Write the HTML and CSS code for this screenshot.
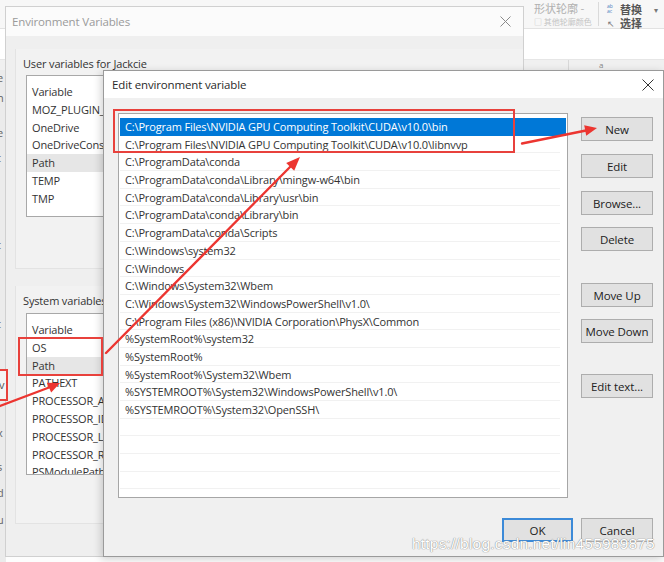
FILE: index.html
```html
<!DOCTYPE html>
<html>
<head>
<meta charset="utf-8">
<link rel="stylesheet" href="styles.css">
</head>
<body>
<div class="desk">
  <div class="bgleft">
    <span class="bg-ch c1">e</span><span class="bg-ch c2">n</span><span class="bg-ch c3">e</span><span class="bg-ch c4">t</span><span class="bg-ch c5">t</span><span class="bg-ch c6">t</span><span class="bg-ch c7">x</span><span class="bg-ch c8">s</span><span class="bg-ch c9">d</span><span class="bg-ch c10">u</span>
  </div>
  <div class="ribbon">
    <div class="rib-top">
      <div class="rib-grp">
        <span class="rib-dim">形状轮廓 -</span>
        <span class="rib-small">□ 其他轮廓颜色</span>
      </div>
      <div class="rib-sep"></div>
      <div class="rib-grp2">
        <div class="rib-line"><span class="rib-ico">ab<br>ac</span><span class="rib-bold">替换</span><span class="rib-caret">▾</span></div>
        <div class="rib-line"><span class="rib-ptr">↖</span><span class="rib-bold">选择</span></div>
      </div>
    </div>
    <div class="rib-doc"></div>
    <div class="rib-ruler"><span class="rr1"></span><span class="rr2">a</span></div>
  </div>

  <div class="win env">
    <div class="tbar">
      <span class="ttl">Environment Variables</span>
      <svg class="xbtn" width="11" height="11" viewBox="0 0 11 11"><path d="M0.5 0.5L10.5 10.5M10.5 0.5L0.5 10.5" stroke="#8a8a8a" stroke-width="1"/></svg>
    </div>
    <div class="env-body">
      <section class="grp grp-user">
        <div class="lbl">User variables for Jackcie</div>
        <div class="lb lb-user">
          <div class="r">Variable</div>
          <div class="r">MOZ_PLUGIN_PATH</div>
          <div class="r">OneDrive</div>
          <div class="r">OneDriveConsumer</div>
          <div class="r hl">Path</div>
          <div class="r">TEMP</div>
          <div class="r">TMP</div>
        </div>
      </section>
      <section class="grp grp-sys">
        <div class="lbl">System variables</div>
        <div class="lb lb-sys">
          <div class="r">Variable</div>
          <div class="r">OS</div>
          <div class="r hl">Path</div>
          <div class="r">PATHEXT</div>
          <div class="r">PROCESSOR_ARCHITECTURE</div>
          <div class="r">PROCESSOR_IDENTIFIER</div>
          <div class="r">PROCESSOR_LEVEL</div>
          <div class="r">PROCESSOR_REVISION</div>
          <div class="r">PSModulePath</div>
        </div>
      </section>
    </div>
  </div>

  <div class="win edit">
    <div class="tbar tbar-edit">
      <span class="ttl ttl-edit">Edit environment variable</span>
      <svg class="xbtn xbtn-edit" width="12" height="12" viewBox="0 0 12 12"><path d="M0.5 0.5L11.5 11.5M11.5 0.5L0.5 11.5" stroke="#333" stroke-width="1"/></svg>
    </div>
    <div class="edit-body">
      <div class="plist">
        <div class="pr sel">C:\Program Files\NVIDIA GPU Computing Toolkit\CUDA\v10.0\bin</div>
        <div class="pr">C:\Program Files\NVIDIA GPU Computing Toolkit\CUDA\v10.0\libnvvp</div>
        <div class="pr">C:\ProgramData\conda</div>
        <div class="pr">C:\ProgramData\conda\Library\mingw-w64\bin</div>
        <div class="pr">C:\ProgramData\conda\Library\usr\bin</div>
        <div class="pr">C:\ProgramData\conda\Library\bin</div>
        <div class="pr">C:\ProgramData\conda\Scripts</div>
        <div class="pr">C:\Windows\system32</div>
        <div class="pr">C:\Windows</div>
        <div class="pr">C:\Windows\System32\Wbem</div>
        <div class="pr">C:\Windows\System32\WindowsPowerShell\v1.0\</div>
        <div class="pr">C:\Program Files (x86)\NVIDIA Corporation\PhysX\Common</div>
        <div class="pr">%SystemRoot%\system32</div>
        <div class="pr">%SystemRoot%</div>
        <div class="pr">%SystemRoot%\System32\Wbem</div>
        <div class="pr">%SYSTEMROOT%\System32\WindowsPowerShell\v1.0\</div>
        <div class="pr">%SYSTEMROOT%\System32\OpenSSH\</div>
        <div class="pr"></div>
        <div class="pr"></div>
        <div class="pr"></div>
        <div class="pr"></div>
      </div>
      <div class="btncol">
        <button class="btn">New</button>
        <button class="btn">Edit</button>
        <button class="btn">Browse...</button>
        <button class="btn">Delete</button>
        <button class="btn gap-big">Move Up</button>
        <button class="btn">Move Down</button>
        <button class="btn gap-big2">Edit text...</button>
      </div>
      <div class="footer">
        <button class="btn btn-ok">OK</button>
        <button class="btn">Cancel</button>
      </div>
    </div>
  </div>

  <div class="mark mark-a"></div>
  <div class="mark mark-b"></div>
  <div class="mark mark-c"><span class="mark-c-txt">v</span></div>

  <svg class="arrows" width="664" height="562" viewBox="0 0 664 562">
    <g stroke="#ec3530" stroke-width="2.4" fill="none" stroke-linecap="round">
      <line x1="522" y1="143.5" x2="586" y2="130.5"/>
      <line x1="106" y1="353" x2="291" y2="166"/>
      <line x1="0" y1="406" x2="49" y2="387.5"/>
    </g>
    <g fill="#ec3530">
      <polygon points="597,128 586.2,135.8 584.2,125.3"/>
      <polygon points="300,157 294.2,170.8 286.2,162.9"/>
      <polygon points="60,383 51.2,392.6 46.8,382.8"/>
    </g>
  </svg>

  <div class="watermark">https://blog.csdn.net/lin455989875</div>
</div>
</body>
</html>
```

FILE: styles.css
```css
* { box-sizing: border-box; margin: 0; padding: 0; }

body {
  width: 664px;
  height: 562px;
  overflow: hidden;
  background: #fff;
  font-family: "Open Sans", "Noto Sans", sans-serif;
  font-size: 11px;
  letter-spacing: -0.15px;
  color: #2e2e2e;
}

.desk {
  position: relative;
  width: 664px;
  height: 562px;
  overflow: hidden;
  background: #fdfdfd;
}

/* background Word window bits */
.bgleft {
  position: absolute;
  left: 0;
  top: 0;
  width: 6px;
  height: 562px;
  background: #ebebeb;
  overflow: hidden;
}
.bg-ch {
  position: absolute;
  left: -3px;
  font-size: 11px;
  color: #666;
}
.bg-ch.c1 { top: 70px; } .bg-ch.c2 { top: 90px; } .bg-ch.c3 { top: 125px; }
.bg-ch.c4 { top: 150px; } .bg-ch.c5 { top: 237px; } .bg-ch.c6 { top: 316px; }
.bg-ch.c7 { top: 425px; } .bg-ch.c8 { top: 459px; } .bg-ch.c9 { top: 485px; }
.bg-ch.c10 { top: 512px; }

.ribbon {
  position: absolute;
  left: 0;
  top: 0;
  width: 664px;
  height: 70px;
  background: #f6f6f6;
  letter-spacing: 0;
}
.rib-top {
  height: 29px;
  display: flex;
  padding-left: 530px;
  border-bottom: 1px solid #e2e2e2;
  background: #f7f7f7;
}
.rib-grp {
  width: 68px;
  display: flex;
  flex-direction: column;
  padding-top: 1px;
  padding-left: 4px;
}
.rib-dim { color: #b0b0b0; font-size: 11px; line-height: 15px; font-family: "Noto Sans CJK SC", sans-serif; }
.rib-small { color: #c4c4c4; font-size: 8px; line-height: 11px; font-family: "Noto Sans CJK SC", sans-serif; }
.rib-sep { width: 1px; background: #dadada; margin: 2px 0; }
.rib-grp2 { padding-left: 8px; display: flex; flex-direction: column; padding-top: 2px; }
.rib-line { display: flex; align-items: center; height: 14px; gap: 2px; }
.rib-ico { font-size: 5px; line-height: 5px; color: #4a7fc0; width: 11px; }
.rib-bold { font-family: "Noto Sans CJK SC", sans-serif; font-weight: 700; font-size: 11px; color: #555; }
.rib-caret { font-size: 8px; color: #777; margin-left: 10px; }
.rib-ptr { font-size: 9px; color: #777; width: 11px; }
.rib-doc { height: 30px; background: #fff; }
.rib-ruler {
  height: 11px;
  background: #f0f0f0;
  border-top: 1px solid #e6e6e6;
  display: flex;
  padding-left: 568px;
  gap: 30px;
}
.rr1 { width: 1px; background: #d8d8d8; }
.rr2 { font-size: 8px; color: #888; line-height: 9px; }

/* windows */
.win {
  position: absolute;
  background: #f0f0f0;
}
.env {
  left: 5px;
  top: 6px;
  width: 519px;
  height: 551px;
  border: 1px solid #d0d0d0;
  background: #efefef;
}
.tbar {
  height: 29px;
  background: #fbfbfb;
  display: flex;
  align-items: center;
  justify-content: space-between;
  padding: 0 12px 0 6px;
}
.ttl { color: #9a9a9a; font-size: 11.5px; }
.env-body { padding-left: 9px; }
.grp {
  border-left: 1px solid #e3e3e3;
  border-bottom: 1px solid #e3e3e3;
  background: #f2f2f2;
  padding: 8px 0 0 10px;
}
.grp-user { margin-top: 13px; height: 220px; }
.grp-sys { margin-top: 17px; height: 238px; }
.lbl { line-height: 14px; color: #333; margin-left: -3px; }
.lb {
  margin-top: 4px;
  width: 420px;
  background: #fff;
  border: 1px solid #a8a8a8;
  padding: 7px 0 0 5px;
  overflow: hidden;
}
.lb-user { height: 142px; }
.lb-sys { height: 162px; margin-top: 5px; }
.r {
  height: 17.8px;
  line-height: 17.8px;
  white-space: nowrap;
  color: #333;
}
.r.hl { background: #e6e6e6; margin-left: -5px; padding-left: 5px; }

/* edit dialog */
.edit {
  left: 103px;
  top: 70px;
  width: 561px;
  height: 487px;
  border: 1px solid #9a9a9a;
  box-shadow: -2px 2px 8px rgba(0,0,0,0.18);
  background: #f0f0f0;
}
.tbar-edit {
  height: 27px;
  background: #fff;
  padding: 0 9px 0 8px;
}
.ttl-edit { color: #2a2a2a; font-size: 11.5px; }
.edit-body {
  display: grid;
  grid-template-columns: 450px 72px;
  column-gap: 13px;
  padding: 15px 0 0 14px;
}
.plist {
  height: 385px;
  background: #fff;
  border: 1px solid #a6a6a6;
  padding: 4px 1px 0 1px;
  overflow: hidden;
}
.pr {
  height: 17.7px;
  line-height: 17.7px;
  padding-left: 5px;
  white-space: nowrap;
  color: #333;
  border-bottom: 1px solid #f1f1f1;
  margin-right: 6px;
}
.pr.sel {
  background: #0078d7;
  color: #fff;
  border-bottom-color: #0078d7;
  margin-right: 0;
}
.btncol {
  display: flex;
  flex-direction: column;
  gap: 13px;
  padding-top: 4px;
}
.btn {
  width: 72px;
  height: 24px;
  background: #e1e1e1;
  border: 1px solid #adadad;
  font-family: inherit;
  font-size: 11.5px;
  letter-spacing: -0.1px;
  color: #222;
}
.btncol .btn:nth-child(4) { margin-top: -1px; }
.gap-big { margin-top: 19px; }
.btncol .btn:nth-child(6) { margin-top: -1px; }
.gap-big2 { margin-top: 18px; }
.footer {
  grid-column: 1 / 3;
  display: flex;
  justify-content: flex-end;
  gap: 8px;
  margin-top: 20px;
}
.btn-ok {
  width: 71px;
  border: 2px solid #3c8ad8;
}

/* annotations */
.mark {
  position: absolute;
  border: 2px solid #e8413c;
}
.mark-a { left: 113px; top: 109px; width: 402px; height: 44px; }
.mark-b { left: 18px; top: 337px; width: 85px; height: 39px; }
.mark-c {
  left: -2px; top: 369px; width: 10px; height: 32px;
  background: #f4f4f4;
}
.mark-c-txt {
  position: absolute;
  left: -1px;
  top: 6px;
  font-size: 11px;
  color: #555;
}

.arrows {
  position: absolute;
  left: 0;
  top: 0;
  pointer-events: none;
}

.watermark {
  position: absolute;
  left: 412px;
  top: 535px;
  font-family: "Liberation Sans", Arial, sans-serif;
  font-size: 15.5px;
  color: #fff;
  text-shadow: 0 0 1px #8a8a8a, 0 0 1px #8a8a8a;
  letter-spacing: 0.2px;
  white-space: nowrap;
}
```
